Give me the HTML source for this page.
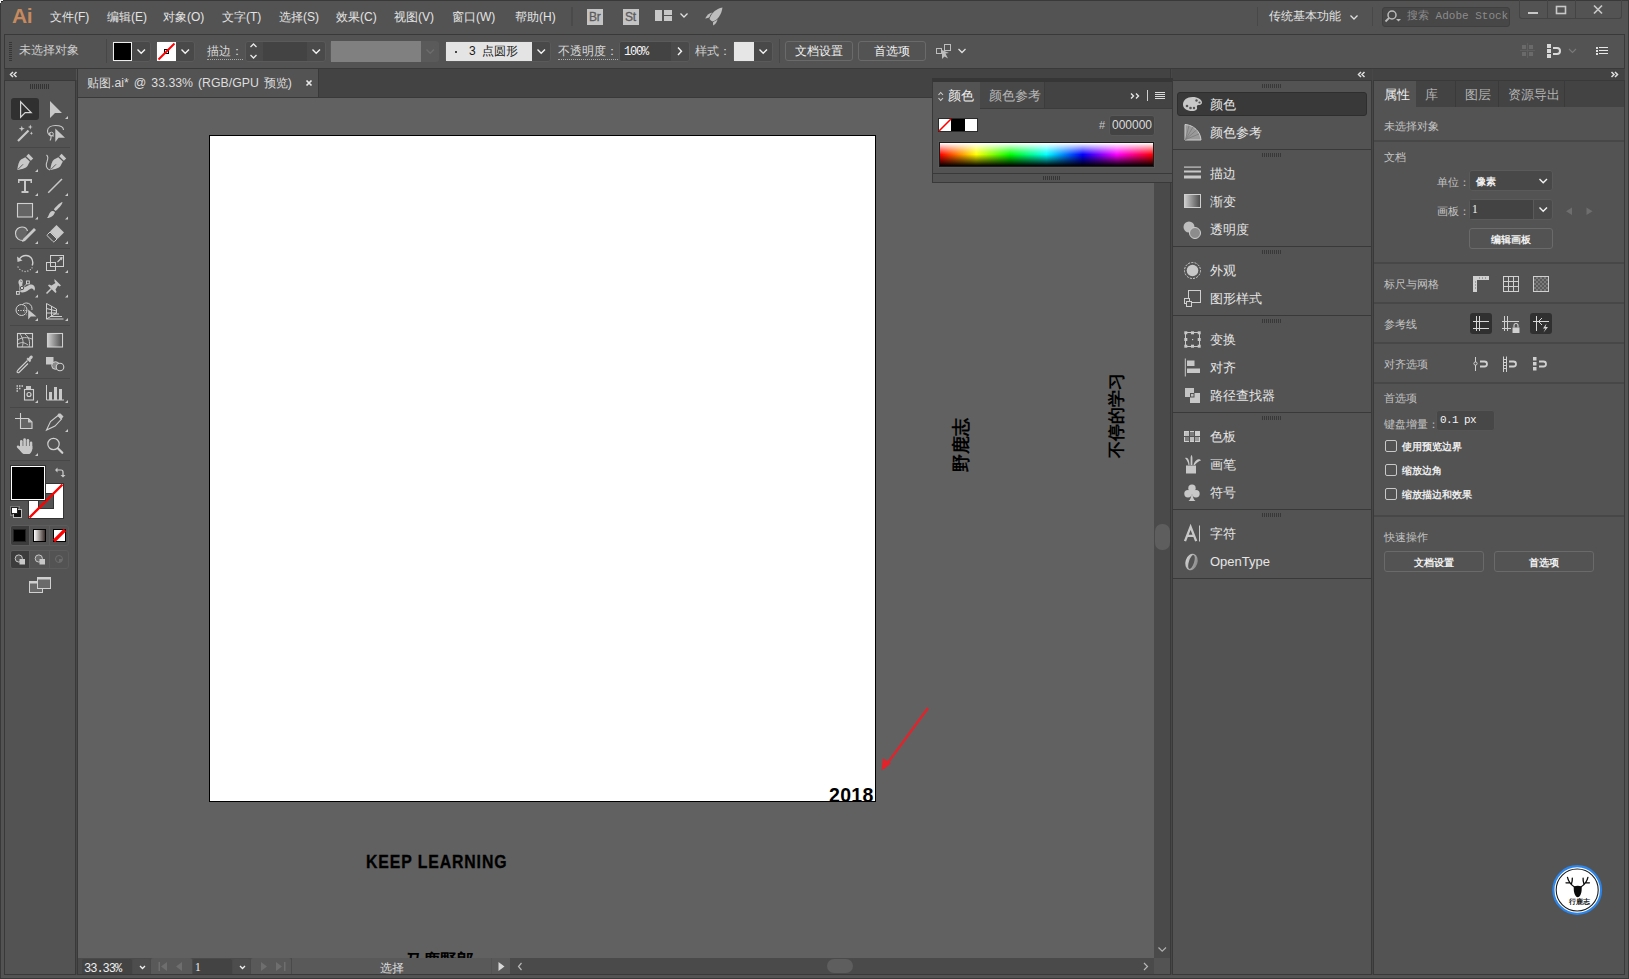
<!DOCTYPE html>
<html><head><meta charset="utf-8">
<style>
*{margin:0;padding:0;box-sizing:border-box}
html,body{width:1629px;height:979px;overflow:hidden;background:#535353;font-family:"Liberation Sans",sans-serif;font-size:12px;color:#dcdcdc}
.a{position:absolute}
.t{position:absolute;white-space:nowrap;line-height:1}
svg.ov{position:absolute;left:0;top:0;width:1629px;height:979px;overflow:visible}
.bd{position:absolute;background:#393939}
.lbl{color:#d4d4d4}
.dot{border-bottom:1px dotted #bbb;padding-bottom:1px}
.btn{position:absolute;border:1px solid #6c6c6c;border-radius:3px;background:#535353}
.dd{position:absolute;background:#4a4a4a;border-radius:2px}
.inp{position:absolute;background:#434343}
</style></head><body>
<!-- ===== window frame ===== -->
<div class="bd" style="left:0;top:0;width:1629px;height:1px"></div>
<div class="bd" style="left:0;top:978px;width:1629px;height:1px"></div>
<div class="bd" style="left:0;top:0;width:1px;height:979px"></div>
<div class="bd" style="left:1628px;top:0;width:1px;height:979px"></div>

<!-- ===== menu bar ===== -->
<div class="t" style="left:12px;top:5px;font-size:21px;font-weight:bold;color:#c68a5e;letter-spacing:-0.3px">Ai</div>
<div class="t" style="left:50px;top:11px;color:#e4e4e4">文件(F)</div>
<div class="t" style="left:107px;top:11px;color:#e4e4e4">编辑(E)</div>
<div class="t" style="left:163px;top:11px;color:#e4e4e4">对象(O)</div>
<div class="t" style="left:222px;top:11px;color:#e4e4e4">文字(T)</div>
<div class="t" style="left:279px;top:11px;color:#e4e4e4">选择(S)</div>
<div class="t" style="left:336px;top:11px;color:#e4e4e4">效果(C)</div>
<div class="t" style="left:394px;top:11px;color:#e4e4e4">视图(V)</div>
<div class="t" style="left:452px;top:11px;color:#e4e4e4">窗口(W)</div>
<div class="t" style="left:515px;top:11px;color:#e4e4e4">帮助(H)</div>
<div class="a" style="left:570.5px;top:7px;width:2px;height:19px;background:#4a4a4a"></div>
<div class="a" style="left:587px;top:9px;width:16px;height:16px;background:#c4c4c4"></div>
<div class="t" style="left:589px;top:11px;font-size:12px;color:#5c5c5c;letter-spacing:-0.3px;-webkit-text-stroke:0.3px #5c5c5c">Br</div>
<div class="a" style="left:623px;top:9px;width:16px;height:16px;background:#c4c4c4"></div>
<div class="t" style="left:625px;top:11px;font-size:12px;color:#5c5c5c;letter-spacing:-0.3px;-webkit-text-stroke:0.3px #5c5c5c">St</div>
<svg class="ov">
 <rect x="655" y="10" width="7" height="11" fill="#c8c8c8"/>
 <rect x="664" y="10" width="8" height="5" fill="#c8c8c8"/>
 <rect x="664" y="16" width="8" height="5" fill="#c8c8c8"/>
 <path d="M680.5 13.5 L684 17 L687.5 13.5" stroke="#e0e0e0" stroke-width="1.3" fill="none"/>
 <path d="M712.5 12.5 C709 13 706.5 15.5 705.2 18.6 C707.5 18.4 709.5 17.5 711 16.5 Z" fill="#bdbdbd"/>
 <path d="M717.5 18.5 C717.5 21.5 715.8 24 713.2 25.5 C712.8 23.5 713 21.5 714 20 Z" fill="#bdbdbd"/>
 <path d="M722.5 7.5 C716 8.5 711 13.5 709.5 19 C710.5 20.2 711.2 20.8 712.5 21.5 C718 20 721.5 14.5 722.5 7.5 Z" fill="#bdbdbd" stroke="#535353" stroke-width="1.4" paint-order="stroke"/>
</svg>
<!-- right side of menu bar -->
<div class="a" style="left:1257px;top:7px;width:1px;height:19px;background:#484848"></div>
<div class="t" style="left:1269px;top:10px;color:#e4e4e4">传统基本功能</div>
<div class="a" style="left:1372px;top:7px;width:1px;height:19px;background:#484848"></div>
<div class="a" style="left:1382px;top:7px;width:128px;height:20px;background:#474747;border:1px solid #3f3f3f;border-radius:3px"></div>
<div class="t" style="left:1407px;top:11px;font-family:'Liberation Mono',monospace;font-size:11px;color:#8c8c8c">搜索 Adobe Stock</div>
<div class="a" style="left:1519px;top:0px;width:103px;height:19px;border:1px solid #444;border-top:none;border-radius:0 0 3px 3px"></div>
<div class="a" style="left:1547px;top:0px;width:1px;height:18px;background:#444"></div>
<div class="a" style="left:1575px;top:0px;width:1px;height:18px;background:#444"></div>
<svg class="ov">
 <path d="M1350.5 15.5 L1354 19 L1357.5 15.5" stroke="#e0e0e0" stroke-width="1.3" fill="none"/>
 <circle cx="1392" cy="15" r="4" stroke="#bbb" stroke-width="1.5" fill="none"/>
 <path d="M1389 18 L1385.5 21.5" stroke="#bbb" stroke-width="1.8"/>
 <path d="M1396 19 L1401 19 L1398.5 21.5 Z" fill="#bbb"/>
 <rect x="1528" y="12" width="10" height="2" fill="#c8c8c8"/>
 <rect x="1556.5" y="6.5" width="9" height="7" stroke="#c8c8c8" stroke-width="1.6" fill="none"/>
 <path d="M1594 5.5 L1602 13.5 M1602 5.5 L1594 13.5" stroke="#c8c8c8" stroke-width="1.7"/>
</svg>

<!-- ===== control bar box ===== -->
<div class="a" style="left:4px;top:34px;width:1621px;height:35px;border:1px solid #393939;background:#535353"></div>

<!-- control bar content -->
<svg class="ov">
 <path d="M9 42.5h3M9 44.5h3M9 46.5h3M9 48.5h3M9 50.5h3M9 52.5h3M9 54.5h3M9 56.5h3M9 58.5h3M9 60.5h3" stroke="#363636" stroke-width="1"/>
</svg>
<div class="t" style="left:19px;top:44px;color:#cdcdcd">未选择对象</div>
<div class="a" style="left:106px;top:39px;width:1px;height:24px;background:#474747"></div>
<!-- fill / stroke -->
<div class="a" style="left:112px;top:41px;width:39px;height:21px;border:1px solid #5a5a5a;border-radius:3px;background:#494949"></div>
<div class="a" style="left:113px;top:42px;width:19px;height:19px;border:1px solid #eee;background:#000"></div>
<div class="a" style="left:156px;top:41px;width:39px;height:21px;border:1px solid #5a5a5a;border-radius:3px;background:#494949"></div>
<div class="a" style="left:157px;top:42px;width:19px;height:19px;background:#fff"></div>
<svg class="ov">
 <path d="M137.5 49.5 L141.2 53.2 L145 49.5" stroke="#f2f2f2" stroke-width="1.4" fill="none"/>
 <path d="M181.5 49.5 L185.2 53.2 L189 49.5" stroke="#f2f2f2" stroke-width="1.4" fill="none"/>
 <rect x="164.5" y="49.5" width="4" height="4" stroke="#000" stroke-width="1" fill="none"/>
 <path d="M158.5 59.5 L174.5 43.5" stroke="#f00" stroke-width="2"/>
</svg>
<div class="t dot" style="left:207px;top:45px;color:#d8d8d8;padding-bottom:2px;border-bottom-color:#aaa">描边：</div>
<!-- stroke weight spinner -->
<div class="a" style="left:245px;top:41px;width:81px;height:21px;border:1px solid #5a5a5a;border-radius:3px;background:#4a4a4a"></div>
<div class="inp" style="left:263px;top:42px;width:44px;height:19px"></div>
<svg class="ov">
 <path d="M250.5 47 L253.5 44 L256.5 47 M250.5 55 L253.5 58 L256.5 55" stroke="#e8e8e8" stroke-width="1.3" fill="none"/>
 <path d="M312.5 49.5 L316.2 53.2 L320 49.5" stroke="#f2f2f2" stroke-width="1.4" fill="none"/>
</svg>
<!-- variable width (disabled) -->
<div class="a" style="left:330px;top:41px;width:109px;height:21px;border-radius:3px;background:#5a5a5a"></div>
<div class="a" style="left:331px;top:41px;width:90px;height:21px;background:#808080"></div>
<svg class="ov"><path d="M426.5 49.5 L430.2 53.2 L434 49.5" stroke="#6c6c6c" stroke-width="1.4" fill="none"/></svg>
<!-- brush definition -->
<div class="a" style="left:445px;top:41px;width:106px;height:21px;border:1px solid #5a5a5a;border-radius:3px;background:#494949"></div>
<div class="a" style="left:446px;top:42px;width:86px;height:19px;background:#e4e4e4"></div>
<div class="a" style="left:454.5px;top:50.5px;width:2.2px;height:2.2px;border-radius:50%;background:#111"></div>
<div class="t" style="left:469px;top:45px;color:#1a1a1a">3&nbsp;&nbsp;点圆形</div>
<svg class="ov"><path d="M537.5 49.5 L541.2 53.2 L545 49.5" stroke="#f2f2f2" stroke-width="1.4" fill="none"/></svg>
<div class="t dot" style="left:558px;top:45px;color:#d8d8d8;padding-bottom:2px;border-bottom-color:#aaa">不透明度：</div>
<!-- opacity -->
<div class="a" style="left:619px;top:41px;width:71px;height:21px;border:1px solid #5a5a5a;border-radius:3px;background:#4a4a4a"></div>
<div class="inp" style="left:620px;top:42px;width:51px;height:19px;border-radius:2px 0 0 2px"></div>
<div class="t" style="left:624px;top:46px;font-family:'Liberation Mono',monospace;font-size:12px;color:#f8f8f8;letter-spacing:-1.2px">100%</div>
<svg class="ov"><path d="M678 47.5 L681.5 51.2 L678 55" stroke="#f2f2f2" stroke-width="1.4" fill="none"/></svg>
<div class="t" style="left:695px;top:45px;color:#d0d0d0">样式：</div>
<div class="a" style="left:733px;top:41px;width:40px;height:21px;border:1px solid #5a5a5a;border-radius:3px;background:#494949"></div>
<div class="a" style="left:734px;top:42px;width:20px;height:19px;background:#e6e6e6"></div>
<svg class="ov"><path d="M759.5 49.5 L763.2 53.2 L767 49.5" stroke="#f2f2f2" stroke-width="1.4" fill="none"/></svg>
<div class="a" style="left:779px;top:39px;width:1px;height:24px;background:#474747"></div>
<div class="btn" style="left:785px;top:41px;width:68px;height:20px;border-color:#6a6a6a"></div>
<div class="t" style="left:795px;top:45px;color:#f0f0f0">文档设置</div>
<div class="btn" style="left:858px;top:41px;width:68px;height:20px;border-color:#6a6a6a"></div>
<div class="t" style="left:874px;top:45px;color:#f0f0f0">首选项</div>
<svg class="ov">
 <rect x="936.5" y="48.5" width="5" height="5" stroke="#bdbdbd" stroke-width="1" fill="none"/>
 <rect x="944.5" y="44.5" width="6" height="6" stroke="#bdbdbd" stroke-width="1" fill="none"/>
 <path d="M942 50 L942 59 L944.5 56.5 L948 58.5 L945.5 53.5 L949 53 Z" fill="#bdbdbd"/>
 <path d="M958.5 49 L962 52.5 L965.5 49" stroke="#e0e0e0" stroke-width="1.3" fill="none"/>
</svg>
<!-- right side control bar icons -->
<svg class="ov">
 <path d="M1527.5 43 V58 M1520 50.5 H1535" stroke="#5f5f5f" stroke-width="1"/>
 <rect x="1522" y="45" width="4" height="4" fill="#6a6a6a"/><rect x="1529" y="45" width="4" height="4" fill="#6a6a6a"/>
 <rect x="1522" y="52" width="4" height="4" fill="#6a6a6a"/><rect x="1529" y="52" width="4" height="4" fill="#6a6a6a"/>
 <rect x="1547" y="44" width="4" height="4" fill="#d8d8d8"/><rect x="1547" y="49" width="4" height="4" fill="#d8d8d8"/><rect x="1547" y="54" width="4" height="4" fill="#d8d8d8"/>
 <path d="M1553 48 H1557 A3 3 0 0 1 1557 54 H1553" stroke="#d8d8d8" stroke-width="2" fill="none"/>
 <path d="M1569 49 L1572.5 52.5 L1576 49" stroke="#7a7a7a" stroke-width="1.1" fill="none"/>
 <rect x="1596" y="47" width="2" height="2" fill="#e0e0e0"/><rect x="1596" y="50" width="2" height="2" fill="#e0e0e0"/><rect x="1596" y="53" width="2" height="2" fill="#e0e0e0"/>
 <path d="M1599 47.5 H1608 M1599 50.5 H1608 M1599 53.5 H1608" stroke="#e8e8e8" stroke-width="1"/>
</svg>

<!-- ===== header strips ===== -->
<div class="a" style="left:4px;top:69px;width:72px;height:11px;background:#434343"></div>
<div class="a" style="left:78px;top:69px;width:1093px;height:28px;background:#434343"></div>
<div class="a" style="left:1172px;top:69px;width:200px;height:11px;background:#434343"></div>
<div class="a" style="left:1373px;top:69px;width:252px;height:11px;background:#434343"></div>

<!-- ===== tools panel box ===== -->
<div class="a" style="left:4px;top:80px;width:72px;height:895px;border:1px solid #393939;background:#535353"></div>
<div class="bd" style="left:77px;top:69px;width:1px;height:906px"></div>
<!-- ===== tools panel content ===== -->
<svg class="ov" fill="#c8c8c8">
 <!-- collapse arrows + grip -->
 <path d="M13 72 L10.5 74.5 L13 77 M16.5 72 L14 74.5 L16.5 77" stroke="#e0e0e0" stroke-width="1.5" fill="none"/>
 <path d="M30.5 84v5M32.5 84v5M34.5 84v5M36.5 84v5M38.5 84v5M40.5 84v5M42.5 84v5M44.5 84v5M46.5 84v5M48.5 84v5" stroke="#333" stroke-width="1"/>
 <!-- separators -->
 <path d="M10 147.5H70M10 248.5H70M10 325.5H70M10 378.5H70M10 407.5H70M10 460.5H70" stroke="#474747" stroke-width="1"/>
 <!-- selection highlight -->
 <rect x="11" y="98" width="28" height="22" rx="3" fill="#303030"/>
 <!-- selection tool -->
 <path d="M20.6 101.8 V117.2 L25.2 112.6 H31.2 Z" stroke="#d4d4d4" stroke-width="1.2" fill="none" stroke-linejoin="miter"/>
 <!-- direct selection -->
 <path d="M50 101 V118 L55 113 H62 Z"/>
 <!-- small triangles -->
 <g>
  <path d="M68 116 V119 H65 Z"/>
  <path d="M38 169 V172 H35 Z"/>
  <path d="M38 193 V196 H35 Z"/><path d="M68 193 V196 H65 Z"/>
  <path d="M38 216.5 V219.5 H35 Z"/><path d="M68 216.5 V219.5 H65 Z"/>
  <path d="M38 241 V244 H35 Z"/><path d="M68 241 V244 H65 Z"/>
  <path d="M38 270 V273 H35 Z"/><path d="M68 270 V273 H65 Z"/>
  <path d="M38 294.5 V297.5 H35 Z"/><path d="M68 294.5 V297.5 H65 Z"/>
  <path d="M38 318 V321 H35 Z"/><path d="M68 318 V321 H65 Z"/>
  <path d="M38 371 V374 H35 Z"/>
  <path d="M38 400 V403 H35 Z"/><path d="M68 400 V403 H65 Z"/>
  <path d="M68 429 V432 H65 Z"/>
  <path d="M38 453 V456 H35 Z"/>
 </g>
 <!-- magic wand -->
 <path d="M18 141 L28.5 130.5" stroke="#c8c8c8" stroke-width="2.2"/>
 <path d="M21.8 125.8 L22.6 128 L24.8 128.6 L22.6 129.4 L21.8 131.6 L21 129.4 L18.8 128.6 L21 128 Z"/>
 <path d="M30.3 124.5 L31 126.4 L32.8 127 L31 127.6 L30.3 129.5 L29.6 127.6 L27.8 127 L29.6 126.4 Z"/>
 <path d="M31.4 131.5 L31.9 132.7 L33 133.2 L31.9 133.7 L31.4 135 L30.9 133.7 L29.8 133.2 L30.9 132.7 Z"/>
 <!-- lasso -->
 <path d="M54 136 C50 136 47.5 134 47.5 131 C47.5 127.5 51 125.5 55.5 125.5 C60.5 125.5 63.5 127.5 63.5 130" stroke="#c8c8c8" stroke-width="1.1" fill="none"/>
 <path d="M50.5 132.5 C49 133 49 135 50.5 135.5 C51.5 136 51 139 50 140.5" stroke="#c8c8c8" stroke-width="1.1" fill="none"/>
 <circle cx="51.5" cy="134" r="1.8" stroke="#c8c8c8" stroke-width="1" fill="none"/>
 <path d="M55.3 128.5 V142 L58.6 137.8 H65 Z"/>
 <!-- pen -->
 <path d="M17.3 169.8 C17.8 165 19 161 21 159.5 L25.3 157.2 L29.8 161.6 L27.5 166 C26 168 22 169.5 17.3 169.8 Z"/>
 <path d="M26.2 156.2 L28.6 153.8 L33.2 158.4 L30.8 160.8 Z"/>
 <path d="M18.3 169 L23 164.3" stroke="#535353" stroke-width="0.9"/>
 <!-- curvature pen -->
 <path d="M50.3 169.8 C50.8 165 52 161 54 159.5 L58.3 157.2 L62.8 161.6 L60.5 166 C59 168 55 169.5 50.3 169.8 Z"/>
 <path d="M59.2 156.2 L61.6 153.8 L66.2 158.4 L63.8 160.8 Z"/>
 <path d="M51.3 169 L56 164.3" stroke="#535353" stroke-width="0.9"/>
 <path d="M46.5 155 C48.5 156.5 48 159 47 161.5 C45.5 165 46 169 50 170" stroke="#c8c8c8" stroke-width="1.1" fill="none"/>
 <!-- type T -->
 <path d="M18 179 H32 V183 H30.5 V181 H26 V191 H28.5 V193 H21.5 V191 H24 V181 H19.5 V183 H18 Z"/>
 <!-- line -->
 <path d="M48.2 192.8 L62 179" stroke="#c8c8c8" stroke-width="1.5"/>
 <!-- rectangle -->
 <rect x="17.5" y="203.5" width="15" height="13.5" stroke="#d0d0d0" stroke-width="1.1" fill="#656565"/>
 <!-- paintbrush -->
 <path d="M62.5 202 C62 205 58 209 55.5 211 L53.8 209.3 C56 206.5 60 202.5 62.5 202 Z"/>
 <path d="M55 212 C54 215.5 51 218 47 218 C48.5 216.5 49 213.5 50.5 212 C51.5 210.5 53.5 210.5 55 212 Z"/>
 <!-- shaper -->
 <path d="M24 240.5 C19 241 15.5 238 15.5 233.5 C15.5 229.5 18.5 227 22 227 C25 227 27 229 27.5 231" stroke="#d0d0d0" stroke-width="1.1" fill="#656565"/>
 <path d="M34 228 L36 230 L25 241 L22 242 L23 239 Z"/>
 <!-- eraser -->
 <path d="M56.5 225 L64 232.5 L57.5 239 L50 231.5 Z"/>
 <path d="M50 232 L57 239 L54.5 241.5 C54 242 53.5 242 53 241.5 L47.5 236 C47 235.5 47 235 47.5 234.5 Z" stroke="#d0d0d0" stroke-width="1" fill="none"/>
 <!-- rotate -->
 <path d="M19.5 259 C21 256.5 23.5 255.5 26 255.5 C30 255.5 32.8 258.5 32.8 262.5 C32.8 263.5 32.6 264.5 32.2 265.5" stroke="#d0d0d0" stroke-width="1.4" fill="none"/>
 <path d="M17 256.5 L17.5 262 L22.5 260.5 Z"/>
 <path d="M18 267l.1.1M19.8 269.3l.1.1M22.2 270.8l.1.1M25 271.4l.1.1M27.8 271l.1.1M30.3 269.6l.1.1M32 267.8l.1.1" stroke="#d0d0d0" stroke-width="1.2" stroke-linecap="round"/>
 <!-- scale -->
 <rect x="50.5" y="255.5" width="13" height="11" stroke="#d0d0d0" stroke-width="1" fill="none"/>
 <rect x="46.5" y="262.5" width="9" height="8" stroke="#d0d0d0" stroke-width="1" fill="none"/>
 <path d="M57.5 262 L62 257.5" stroke="#d0d0d0" stroke-width="1.1"/>
 <path d="M62.5 257 L59 257.5 L62 260.5 Z"/>
 <!-- puppet warp -->
 <path d="M18.6 283.5 C18 281.5 18.8 279.5 20.6 279.3 C22.3 279.2 23.2 280.8 22.7 282.6 C22.3 284.3 21.8 285.8 23.2 286.8 C25.2 288 27.6 285.3 30.2 284.6 C32.7 284 34.6 285.6 34.9 288 C35.1 289.6 34.6 290.6 33.9 290.6 C33.4 289.2 32.6 288.2 31.1 288.6 C28.6 289.6 26.1 292.6 22.6 292.6 C20.1 292.6 18.9 291.1 19.3 289.1 C19.7 287.1 19.4 285.3 18.6 283.5 Z"/>
 <path d="M20.2 281.2 C20.8 280.6 21.6 281 21.4 281.8" stroke="#535353" stroke-width="0.8" fill="none"/>
 <path d="M18.5 292 L27.5 283" stroke="#535353" stroke-width="1.6"/>
 <path d="M18.5 292 L27.5 283" stroke="#d0d0d0" stroke-width="0.8"/>
 <rect x="16.5" y="291.5" width="2.8" height="2.8" stroke="#d0d0d0" stroke-width="1" fill="#535353"/>
 <rect x="26.5" y="281" width="2.8" height="2.8" stroke="#d0d0d0" stroke-width="1" fill="#535353"/>
 <circle cx="22" cy="288" r="1.7" stroke="#535353" stroke-width="1" fill="#d0d0d0"/>
 <!-- pin -->
 <path d="M54.5 279 L61 285.5 L59.5 286.5 L58 285.5 L55.5 289.5 L56.5 292 L55.5 293 L48 285.5 L49 284.5 L51.5 285.5 L55.5 283 L54.5 281.5 Z"/>
 <path d="M46.5 293.5 L51.5 288.5" stroke="#c8c8c8" stroke-width="1.6"/>
 <!-- shape builder -->
 <circle cx="21.5" cy="310" r="5.5" stroke="#d0d0d0" stroke-width="1" fill="none"/>
 <path d="M22.5 304.6 C23.5 303.6 25 303 26.5 303 C29.5 303 32 305.5 32 308.5 C32 309 32 309.5 31.8 310" stroke="#d0d0d0" stroke-width="1" fill="none"/>
 <path d="M26.5 304.8 C25 306 24 308 24.2 310.5 C24.4 312.5 25.5 314.2 27 315.2" stroke="#8a8a8a" stroke-width="0.9" fill="none"/>
 <path d="M18 310.5h1M20.5 310.5h1M23 310.5h1M25.5 310.5h1" stroke="#e0e0e0" stroke-width="1.2"/>
 <path d="M28.2 309.5 V319.5 L30.8 316.5 H36.5 Z"/>
 <!-- perspective grid -->
 <path d="M46.5 303.5 L56.5 309 L56.5 313 L46.5 319 Z M46.5 308.5 L56.5 311 M51.5 306 V316 M46.5 313 L56.5 313" stroke="#d0d0d0" stroke-width="1" fill="none"/>
 <path d="M46.5 319 H63.5 M50 316.5 H62 M53.5 314 H59" stroke="#d0d0d0" stroke-width="1" fill="none"/>
 <!-- mesh -->
 <rect x="17.5" y="333.5" width="15" height="13.5" stroke="#d0d0d0" stroke-width="1.1" fill="none"/>
 <path d="M18 340 C22 337 27 337 32 339 M20 334 C23 338 24 343 22 347 M25 334 C29 337 30.5 342 29 347 M18 344 C21 342 24 342 28 345" stroke="#d0d0d0" stroke-width="0.9" fill="none"/>
 <!-- gradient -->
 <defs><linearGradient id="gr1" x1="0" x2="1"><stop offset="0" stop-color="#d0d0d0"/><stop offset="1" stop-color="#4a4a4a"/></linearGradient>
 <linearGradient id="gr2" x1="0" x2="1"><stop offset="0" stop-color="#fff"/><stop offset="1" stop-color="#3a2e2a"/></linearGradient>
 <linearGradient id="spec" x1="0" x2="1"><stop offset="0" stop-color="#f00"/><stop offset="0.17" stop-color="#ff0"/><stop offset="0.33" stop-color="#0f0"/><stop offset="0.5" stop-color="#0ff"/><stop offset="0.67" stop-color="#00f"/><stop offset="0.83" stop-color="#f0f"/><stop offset="1" stop-color="#f00"/></linearGradient>
 <linearGradient id="specv" x1="0" x2="0" y1="0" y2="1"><stop offset="0" stop-color="#fff" stop-opacity="1"/><stop offset="0.5" stop-color="#fff" stop-opacity="0"/><stop offset="0.5" stop-color="#000" stop-opacity="0"/><stop offset="1" stop-color="#000" stop-opacity="1"/></linearGradient>
 </defs>
 <rect x="47.5" y="333.5" width="15" height="13.5" stroke="#d0d0d0" stroke-width="1.1" fill="url(#gr1)"/>
 <!-- eyedropper -->
 <path d="M30 356 C31.5 354.5 33.5 356 32.5 358 L30.5 360 L31.2 360.8 L29.8 362.2 L26.5 358.9 L27.9 357.5 L28.6 358.2 Z"/>
 <path d="M27.5 360.5 L19 369 C17.5 370.5 17 371 17 372 C17.5 373 18.5 373 19.5 372 L28 363.5" stroke="#d0d0d0" stroke-width="1.1" fill="none"/>
 <!-- blend -->
 <rect x="46" y="357" width="7.5" height="7.5"/>
 <circle cx="55.5" cy="365.5" r="3.8" stroke="#d0d0d0" stroke-width="1" fill="#8a8a8a"/>
 <circle cx="60" cy="367" r="3.8" stroke="#d0d0d0" stroke-width="1.1" fill="#535353"/>
 <!-- symbol sprayer -->
 <path d="M16.5 386h1.5M19 386h1.5M21.5 386h1.5M16.5 388.5h1.5M19 388.5h1.5M16.5 391h1.5" stroke="#d0d0d0" stroke-width="1.5"/>
 <rect x="24.5" y="389.5" width="9" height="10.5" stroke="#d0d0d0" stroke-width="1.1" fill="none"/>
 <rect x="26" y="386" width="5" height="3"/>
 <circle cx="29" cy="394.5" r="2" stroke="#d0d0d0" stroke-width="1.2" fill="none"/>
 <!-- graph -->
 <path d="M46.5 385 V400 H64" stroke="#d0d0d0" stroke-width="1" fill="none"/>
 <rect x="49" y="392" width="3" height="8"/><rect x="54" y="387" width="3" height="13"/><rect x="59" y="389" width="3" height="11"/>
 <!-- artboard -->
 <path d="M20.5 413 V418 M15 418.5 H20" stroke="#d0d0d0" stroke-width="1.1"/>
 <path d="M20.5 418.5 H28.5 L32 422 V428.5 H20.5 Z" stroke="#d0d0d0" stroke-width="1.1" fill="#656565"/>
 <path d="M28 418.5 L32 422.5 H28 Z"/>
 <!-- slice / knife -->
 <path d="M58 415.5 L61.5 419 L55 426 L46.5 430 L50.5 421.5 Z" stroke="#d0d0d0" stroke-width="1.1" fill="none"/>
 <path d="M58.5 413.5 L60.5 413.5 L63.5 416.5 L61.5 419 L57.5 415 Z"/>
 <!-- hand -->
 <rect x="20" y="440" width="2.6" height="9" rx="1.3"/>
 <rect x="23.3" y="438.2" width="2.6" height="10" rx="1.3"/>
 <rect x="26.6" y="439" width="2.6" height="10" rx="1.3"/>
 <rect x="29.8" y="441.5" width="2.5" height="8" rx="1.25"/>
 <path d="M20 446 H32.3 V448.5 C32.3 451 31 453 29.5 454 H23.5 C22 453 20.5 451.5 20 450 Z"/>
 <path d="M17.2 445.8 C16.5 446.5 16.8 447.3 17.5 448 L21.5 452 L22.5 449 L19.5 446 C18.8 445.3 17.8 445.2 17.2 445.8 Z"/>
 <!-- zoom -->
 <circle cx="53.5" cy="444" r="5.7" stroke="#d0d0d0" stroke-width="1.2" fill="none"/>
 <path d="M57.8 448.3 L62.3 452.8" stroke="#d0d0d0" stroke-width="2.2" stroke-linecap="round"/>
 <!-- swap arrow -->
 <path d="M56 470 H61 C62.5 470 63 471 63 472 V476" stroke="#d0d0d0" stroke-width="1.2" fill="none"/>
 <path d="M55 470 L57.5 467.5 V472.5 Z M63 477.5 L60.5 475 H65.5 Z"/>
 <!-- default fill/stroke -->
 <rect x="10.5" y="506.5" width="9" height="9" fill="none" stroke="#777" stroke-width="1"/>
 <rect x="13.5" y="509.5" width="8" height="8" fill="#111" stroke="#bbb" stroke-width="1"/>
 <rect x="11.5" y="507.5" width="6" height="6" fill="#fff" stroke="#222" stroke-width="1"/>
</svg>
<!-- stroke swatch -->
<div class="a" style="left:28px;top:483px;width:36px;height:36px;background:#333;"></div>
<div class="a" style="left:29px;top:484px;width:34px;height:34px;background:#fff;"></div>
<div class="a" style="left:38px;top:493px;width:16px;height:16px;background:#333;"></div>
<div class="a" style="left:39px;top:494px;width:14px;height:14px;background:#535353;"></div>
<svg class="ov"><path d="M29.5 517.5 L62.5 484.5" stroke="#f00" stroke-width="2.4"/></svg>
<!-- fill swatch -->
<div class="a" style="left:10px;top:465px;width:36px;height:36px;background:#333;"></div>
<div class="a" style="left:11px;top:466px;width:34px;height:34px;background:#fff;"></div>
<div class="a" style="left:12px;top:467px;width:32px;height:32px;background:#000;"></div>
<!-- color mode group -->
<div class="a" style="left:10px;top:525px;width:59px;height:21px;border:1px solid #5c5c5c;border-radius:3px;background:#535353"></div>
<div class="a" style="left:11px;top:526px;width:18px;height:19px;background:#3c3c3c;border-radius:2px 0 0 2px"></div>
<div class="a" style="left:29px;top:526px;width:1px;height:19px;background:#5c5c5c"></div>
<div class="a" style="left:49px;top:526px;width:1px;height:19px;background:#5c5c5c"></div>
<div class="a" style="left:13px;top:529px;width:13px;height:13px;background:#000;border:1px solid #222"></div>
<div class="a" style="left:33px;top:529px;width:13px;height:13px;border:1px solid #000;background:linear-gradient(90deg,#fff,#3a2e2a)"></div>
<div class="a" style="left:53px;top:529px;width:13px;height:13px;border:1px solid #000;background:#fff;overflow:hidden"></div>
<svg class="ov"><path d="M54 541 L65 530" stroke="#f00" stroke-width="3.2"/></svg>
<!-- draw mode group -->
<div class="a" style="left:10px;top:550px;width:59px;height:19px;border:1px solid #5c5c5c;border-radius:3px;background:#535353"></div>
<div class="a" style="left:11px;top:551px;width:18px;height:17px;background:#3c3c3c;border-radius:2px 0 0 2px"></div>
<div class="a" style="left:29px;top:551px;width:1px;height:17px;background:#5c5c5c"></div>
<div class="a" style="left:49px;top:551px;width:1px;height:17px;background:#5c5c5c"></div>
<svg class="ov">
 <circle cx="18.8" cy="558.5" r="3.6" stroke="#c8c8c8" stroke-width="1" fill="#555"/>
 <rect x="19.5" y="559" width="5.5" height="5.5" fill="#c8c8c8"/>
 <circle cx="38.8" cy="558.5" r="3.6" stroke="#c8c8c8" stroke-width="1" fill="#6a6a6a"/>
 <rect x="39.5" y="559" width="5.5" height="5.5" fill="#c8c8c8"/>
 <circle cx="59" cy="559" r="3.5" stroke="#6c6c6c" stroke-width="1" fill="none"/>
 <path d="M59 559 H62.5 A3.5 3.5 0 0 1 59 562.5 Z" fill="#6c6c6c"/>
 <!-- screen mode -->
 <rect x="29.5" y="581.5" width="13" height="11" stroke="#d0d0d0" stroke-width="1" fill="#6a6a6a"/>
 <rect x="29.5" y="581.5" width="13" height="2" fill="#d0d0d0"/>
 <rect x="37.5" y="577.5" width="13" height="11" stroke="#d0d0d0" stroke-width="1" fill="#6a6a6a"/>
 <rect x="37.5" y="577.5" width="13" height="2" fill="#d0d0d0"/>
</svg>


<!-- ===== document tab ===== -->
<div class="a" style="left:78px;top:69px;width:241px;height:28px;background:#535353;border-right:1px solid #393939"></div>
<div class="t" style="left:87px;top:77px;font-size:12.3px;word-spacing:1.6px;color:#dedede">贴图.ai* @ 33.33% (RGB/GPU 预览)</div>

<!-- ===== canvas ===== -->
<div class="bd" style="left:78px;top:97px;width:1093px;height:1px"></div>
<div class="a" style="left:78px;top:98px;width:1076px;height:860px;background:#616161;overflow:hidden">
  <!-- artboard -->
  <div class="a" style="left:131px;top:37px;width:667px;height:667px;border:1px solid #000;background:#fff"></div>
  <div class="t" style="left:751px;top:688px;font-size:19.5px;font-weight:bold;color:#000;letter-spacing:0.3px">2018</div>
  <div class="t" style="left:288px;top:755px;font-size:18px;font-weight:bold;color:#000;letter-spacing:1px;-webkit-text-stroke:0.3px #000;transform:scaleX(0.88);transform-origin:0 0">KEEP LEARNING</div>
  <div class="t" style="left:875px;top:374px;font-size:17.5px;font-weight:bold;color:#000;transform:rotate(-90deg);transform-origin:0 0">野鹿志</div>
  <div class="t" style="left:1031px;top:360px;font-size:16.7px;font-weight:bold;color:#000;transform:rotate(-90deg);transform-origin:0 0">不停的学习</div>
  <svg class="a" style="left:0;top:0;width:1076px;height:860px;overflow:visible"><path d="M850 610 L806 670" stroke="#e5222a" stroke-width="2.2" fill="none"/><path d="M803.5 672.5 L805 660 L813 665.5 Z" fill="#e5222a"/></svg>
  <div class="t" style="left:328px;top:854px;font-size:16.5px;font-weight:bold;color:#000">马鹿野郎</div>
</div>
<!-- vertical scrollbar -->
<div class="a" style="left:1154px;top:98px;width:16px;height:860px;background:#4a4a4a"></div>
<div class="bd" style="left:1170px;top:69px;width:1px;height:906px"></div>
<div class="a" style="left:1171px;top:69px;width:1px;height:906px;background:#474747"></div>
<!-- status bar -->
<div class="a" style="left:78px;top:958px;width:1092px;height:16px;background:#4a4a4a"></div>
<div class="bd" style="left:78px;top:974px;width:1093px;height:1px"></div>

<!-- ===== floating color panel ===== -->
<div class="a" style="left:932px;top:78px;width:241px;height:105px;background:#535353;border:1px solid #393939;border-top:4px solid #363636"></div>
<div class="a" style="left:933px;top:82px;width:239px;height:26px;background:#434343"></div>
<div class="a" style="left:933px;top:82px;width:47px;height:27px;background:#535353"></div>
<div class="a" style="left:980px;top:82px;width:65px;height:26px;background:#484848;border-right:1px solid #3c3c3c"></div>
<div class="a" style="left:980px;top:108px;width:192px;height:1px;background:#3c3c3c"></div>
<div class="t" style="left:948px;top:89px;font-size:13px;color:#f0f0f0">颜色</div>
<div class="t" style="left:989px;top:89px;font-size:13px;color:#b8b8b8">颜色参考</div>
<svg class="ov">
 <path d="M938.5 95 L940.7 92.5 L943 95 M938.5 98 L940.7 100.5 L943 98" stroke="#cfcfcf" stroke-width="1.1" fill="none"/>
 <path d="M1131 93.5 L1133.5 96 L1131 98.5 M1136 93.5 L1138.5 96 L1136 98.5" stroke="#e6e6e6" stroke-width="1.4" fill="none"/>
 <path d="M1147.5 90 V101" stroke="#cfcfcf" stroke-width="1"/>
 <path d="M1155 92.5H1165M1155 94.5H1165M1155 96.5H1165M1155 98.5H1165" stroke="#dcdcdc" stroke-width="1"/>
</svg>
<!-- none/black/white -->
<div class="a" style="left:938px;top:118px;width:40px;height:14px;background:#2a2a2a"></div>
<div class="a" style="left:939px;top:119px;width:12px;height:12px;background:#fff;overflow:hidden"></div>
<div class="a" style="left:951px;top:119px;width:14px;height:12px;background:#000"></div>
<div class="a" style="left:965px;top:119px;width:12px;height:12px;background:#fff"></div>
<svg class="ov"><path d="M939 131 L951 119" stroke="#f00" stroke-width="1.6"/></svg>
<div class="t" style="left:1099px;top:120px;font-size:11px;color:#c8c8c8">#</div>
<div class="a" style="left:1109px;top:115px;width:46px;height:21px;background:#434343;border:1px solid #585858;border-radius:3px"></div>
<div class="t" style="left:1112px;top:119px;font-family:"Liberation Mono",monospace;font-size:11.5px;color:#f4f4f4;letter-spacing:-0.9px">000000</div>
<!-- spectrum -->
<div class="a" style="left:938px;top:141px;width:217px;height:27px;background:#5a5a5a"></div>
<div class="a" style="left:939px;top:142px;width:215px;height:25px;background:#1a1a1a"></div>
<div class="a" style="left:940px;top:143px;width:213px;height:23px;background:linear-gradient(180deg,rgba(255,255,255,1) 0%,rgba(255,255,255,0) 50%,rgba(0,0,0,0) 50%,rgba(0,0,0,1) 100%),linear-gradient(90deg,#f00 0%,#ff0 17%,#0f0 33%,#0ff 50%,#00f 67%,#f0f 83%,#f00 100%)"></div>
<!-- bottom grip bar -->
<div class="a" style="left:933px;top:173px;width:239px;height:1px;background:#393939"></div>
<svg class="ov"><path d="M1043.5 176v4M1045.5 176v4M1047.5 176v4M1049.5 176v4M1051.5 176v4M1053.5 176v4M1055.5 176v4M1057.5 176v4M1059.5 176v4" stroke="#363636" stroke-width="1"/></svg>

<!-- status bar content -->
<div class="a" style="left:82px;top:959px;width:50px;height:15px;background:#434343;border-radius:2px 2px 0 0"></div>
<div class="t" style="left:84px;top:963px;font-family:'Liberation Mono',monospace;font-size:12px;color:#f0f0f0;letter-spacing:-1px">33.33%</div>
<div class="a" style="left:133px;top:959px;width:17px;height:15px;background:#4d4d4d;border-radius:2px 2px 0 0"></div>
<div class="a" style="left:151px;top:958px;width:41px;height:16px;background:#595959;border-radius:2px 2px 0 0"></div>
<div class="a" style="left:193px;top:959px;width:39px;height:15px;background:#434343;border-radius:2px 2px 0 0"></div>
<div class="t" style="left:195px;top:962px;font-family:'Liberation Serif',serif;font-size:11.5px;color:#f0f0f0">1</div>
<div class="a" style="left:233px;top:959px;width:17px;height:15px;background:#4d4d4d;border-radius:2px 2px 0 0"></div>
<div class="a" style="left:251px;top:958px;width:40px;height:16px;background:#595959;border-radius:2px 2px 0 0"></div>
<div class="a" style="left:292px;top:958px;width:199px;height:16px;background:#595959"></div>
<div class="t" style="left:380px;top:962px;font-size:12px;color:#dcdcdc">选择</div>
<div class="a" style="left:491px;top:958px;width:19px;height:16px;background:#595959;border-left:1px solid #535353"></div>
<div class="a" style="left:827px;top:959px;width:26px;height:14px;background:#5e5e5e;border-radius:7px"></div>
<div class="a" style="left:1155px;top:524px;width:15px;height:26px;background:#5e5e5e;border-radius:7px"></div>
<div class="a" style="left:1154px;top:958px;width:16px;height:16px;background:#535353"></div>
<svg class="ov">
 <path d="M140 966 L142.5 968.5 L145 966" stroke="#f0f0f0" stroke-width="1.3" fill="none"/>
 <path d="M240 966 L242.5 968.5 L245 966" stroke="#f0f0f0" stroke-width="1.3" fill="none"/>
 <rect x="158.5" y="962" width="1.5" height="9" fill="#6e6e6e"/>
 <path d="M167 962 V971 L161 966.5 Z" fill="#6e6e6e"/>
 <path d="M182 962 V971 L176 966.5 Z" fill="#6e6e6e"/>
 <path d="M261 962 V971 L267 966.5 Z" fill="#6e6e6e"/>
 <path d="M276 962 V971 L282 966.5 Z" fill="#6e6e6e"/>
 <rect x="284" y="962" width="1.5" height="9" fill="#6e6e6e"/>
 <path d="M498.5 962 V971 L504.5 966.5 Z" fill="#d8d8d8"/>
 <path d="M521.5 963 L518.5 966.5 L521.5 970" stroke="#b8b8b8" stroke-width="1.2" fill="none"/>
 <path d="M1144 963 L1147.5 966.5 L1144 970" stroke="#b8b8b8" stroke-width="1.2" fill="none"/>
 <path d="M1158.5 947.5 L1162.2 951.2 L1166 947.5" stroke="#b0b0b0" stroke-width="1.2" fill="none"/>
 <!-- tab close -->
 <path d="M306.5 80.5 L311.5 85.5 M311.5 80.5 L306.5 85.5" stroke="#e8e8e8" stroke-width="1.7"/>
</svg>
<div class="a" style="left:76px;top:80px;width:1px;height:895px;background:#474747"></div>

<!-- ===== middle dock ===== -->
<div class="a" style="left:1172px;top:80px;width:200px;height:895px;border:1px solid #393939;background:#535353"></div>
<div class="a" style="left:1372px;top:69px;width:1px;height:906px;background:#474747"></div>

<!-- middle dock content -->
<div class="a" style="left:1177px;top:92px;width:190px;height:24px;background:#393939;border:1px solid #2e2e2e;border-radius:3px"></div>
<div class="t" style="left:1210px;top:98px;font-size:13px;color:#e6e6e6">颜色</div>
<div class="t" style="left:1210px;top:126px;font-size:13px;color:#e6e6e6">颜色参考</div>
<div class="t" style="left:1210px;top:167px;font-size:13px;color:#e6e6e6">描边</div>
<div class="t" style="left:1210px;top:195px;font-size:13px;color:#e6e6e6">渐变</div>
<div class="t" style="left:1210px;top:223px;font-size:13px;color:#e6e6e6">透明度</div>
<div class="t" style="left:1210px;top:264px;font-size:13px;color:#e6e6e6">外观</div>
<div class="t" style="left:1210px;top:292px;font-size:13px;color:#e6e6e6">图形样式</div>
<div class="t" style="left:1210px;top:333px;font-size:13px;color:#e6e6e6">变换</div>
<div class="t" style="left:1210px;top:361px;font-size:13px;color:#e6e6e6">对齐</div>
<div class="t" style="left:1210px;top:389px;font-size:13px;color:#e6e6e6">路径查找器</div>
<div class="t" style="left:1210px;top:430px;font-size:13px;color:#e6e6e6">色板</div>
<div class="t" style="left:1210px;top:458px;font-size:13px;color:#e6e6e6">画笔</div>
<div class="t" style="left:1210px;top:486px;font-size:13px;color:#e6e6e6">符号</div>
<div class="t" style="left:1210px;top:527px;font-size:13px;color:#e6e6e6">字符</div>
<div class="t" style="left:1210px;top:555px;font-size:13px;color:#e6e6e6">OpenType</div>
<svg class="ov" fill="#c8c8c8">
 <path d="M1361 72 L1358.5 74.5 L1361 77 M1364.5 72 L1362 74.5 L1364.5 77" stroke="#e0e0e0" stroke-width="1.5" fill="none"/>
 <path d="M1262.5 84v4M1264.5 84v4M1266.5 84v4M1268.5 84v4M1270.5 84v4M1272.5 84v4M1274.5 84v4M1276.5 84v4M1278.5 84v4M1280.5 84v4" stroke="#383838" stroke-width="1"/>
 <path d="M1262.5 153v4M1264.5 153v4M1266.5 153v4M1268.5 153v4M1270.5 153v4M1272.5 153v4M1274.5 153v4M1276.5 153v4M1278.5 153v4M1280.5 153v4" stroke="#383838" stroke-width="1"/>
 <path d="M1262.5 250v4M1264.5 250v4M1266.5 250v4M1268.5 250v4M1270.5 250v4M1272.5 250v4M1274.5 250v4M1276.5 250v4M1278.5 250v4M1280.5 250v4" stroke="#383838" stroke-width="1"/>
 <path d="M1262.5 319v4M1264.5 319v4M1266.5 319v4M1268.5 319v4M1270.5 319v4M1272.5 319v4M1274.5 319v4M1276.5 319v4M1278.5 319v4M1280.5 319v4" stroke="#383838" stroke-width="1"/>
 <path d="M1262.5 416v4M1264.5 416v4M1266.5 416v4M1268.5 416v4M1270.5 416v4M1272.5 416v4M1274.5 416v4M1276.5 416v4M1278.5 416v4M1280.5 416v4" stroke="#383838" stroke-width="1"/>
 <path d="M1262.5 513v4M1264.5 513v4M1266.5 513v4M1268.5 513v4M1270.5 513v4M1272.5 513v4M1274.5 513v4M1276.5 513v4M1278.5 513v4M1280.5 513v4" stroke="#383838" stroke-width="1"/>
 <rect x="1173" y="149" width="198" height="1" fill="#393939"/>
 <rect x="1173" y="246" width="198" height="1" fill="#393939"/>
 <rect x="1173" y="315" width="198" height="1" fill="#393939"/>
 <rect x="1173" y="412" width="198" height="1" fill="#393939"/>
 <rect x="1173" y="509" width="198" height="1" fill="#393939"/>
 <rect x="1173" y="578" width="198" height="1" fill="#393939"/>

 <!-- palette -->
 <path d="M1192.5 97 C1198 97 1202 99.5 1202 102.5 C1202 104.5 1200 105 1198.5 105 C1197 105 1196.5 106 1197 107.5 C1197.5 109 1196.5 111 1192 111 C1187 111 1183 108.5 1183 104.5 C1183 100 1187 97 1192.5 97 Z"/>
 <circle cx="1187" cy="106" r="1.3" fill="#535353"/><circle cx="1190.5" cy="108" r="1.3" fill="#535353"/><circle cx="1194" cy="108" r="1.2" fill="#535353"/>
 <circle cx="1196.5" cy="100.5" r="1.2" fill="#535353"/><circle cx="1199.5" cy="102.5" r="1.1" fill="#535353"/>
 <!-- color guide -->
 <path d="M1185 124.5 C1193.5 125 1200.5 131.5 1201 140 H1185 Z" fill="#9a9a9a" stroke="#cfcfcf" stroke-width="1"/>
 <path d="M1185.5 139.5 L1189 125.5 M1185.5 139.5 L1193 127 M1185.5 139.5 L1196.5 130 M1185.5 139.5 L1199 134" stroke="#7a7a7a" stroke-width="0.8"/>
 <!-- stroke -->
 <rect x="1184" y="166.5" width="17" height="1.2"/><rect x="1184" y="170.5" width="17" height="2"/><rect x="1184" y="175.5" width="17" height="3"/>
 <!-- gradient -->
 <rect x="1184.5" y="194.5" width="16" height="13" stroke="#cfcfcf" stroke-width="1" fill="url(#gr1)"/>
 <!-- transparency -->
 <circle cx="1189" cy="227" r="5.5" fill="#bdbdbd"/>
 <circle cx="1195" cy="233" r="5.5" fill="#8c8c8c" stroke="#cfcfcf" stroke-width="1"/>
 <!-- appearance -->
 <circle cx="1192.5" cy="270.5" r="8" stroke="#cfcfcf" stroke-width="1" stroke-dasharray="2 1.3" fill="none"/>
 <circle cx="1192.5" cy="270.5" r="5.8"/>
 <!-- graphic styles -->
 <rect x="1188.5" y="290.5" width="12" height="12" stroke="#cfcfcf" stroke-width="1" fill="none"/>
 <rect x="1184.5" y="298.5" width="5" height="5" stroke="#cfcfcf" stroke-width="1" fill="#535353"/>
 <rect x="1186.5" y="301.5" width="5" height="5" stroke="#cfcfcf" stroke-width="1" fill="#535353"/>
 <!-- transform -->
 <rect x="1185.5" y="332.5" width="14" height="14" stroke="#c8c8c8" stroke-width="1" fill="none"/>
 <rect x="1184.3" y="331.3" width="3" height="3"/><rect x="1191" y="331.3" width="3" height="3"/><rect x="1197.7" y="331.3" width="3" height="3"/>
 <rect x="1184.3" y="338" width="3" height="3"/><rect x="1197.7" y="338" width="3" height="3"/>
 <rect x="1184.3" y="344.7" width="3" height="3"/><rect x="1191" y="344.7" width="3" height="3"/><rect x="1197.7" y="344.7" width="3" height="3"/>
 <rect x="1192" y="339" width="1.2" height="1.2"/>
 <!-- align -->
 <rect x="1184.8" y="358.5" width="1" height="18"/>
 <rect x="1187" y="360.5" width="7.5" height="5.5"/><rect x="1187" y="368.5" width="13" height="4.5"/>
 <!-- pathfinder -->
 <rect x="1185" y="388" width="9" height="9" fill="#c4c4c4"/>
 <rect x="1190" y="393" width="10" height="10" fill="#c8c8c8"/>
 <rect x="1190.5" y="393.5" width="3.5" height="3.5" fill="#bdbdbd" stroke="#535353" stroke-width="1"/>
 <!-- swatches -->
 <rect x="1184" y="431" width="16" height="11" fill="#cfcfcf"/>
 <path d="M1184 436.5 H1200 M1189.5 431 V442 M1194.5 431 V442" stroke="#535353" stroke-width="1"/>
 <rect x="1185" y="432" width="4" height="4" fill="#bdbdbd"/><rect x="1190" y="432" width="4" height="4" fill="#7c7c7c"/><rect x="1195" y="432" width="4" height="4" fill="#cfcfcf"/>
 <rect x="1185" y="437" width="4" height="4" fill="#7c7c7c"/><rect x="1190" y="437" width="4" height="4" fill="#bdbdbd"/><rect x="1195" y="437" width="4" height="4" fill="#9a9a9a"/>
 <!-- brushes -->
 <path d="M1186 465.5 H1196 V473.5 H1186 Z"/>
 <path d="M1188.5 465 C1188 462 1186.5 459.5 1185 458 C1186 457.5 1187 457.5 1187.8 458.5 C1189 460 1189.5 462.5 1189.5 465 Z"/>
 <path d="M1190.6 465 V458 C1190.6 456.5 1191 455.5 1191.5 455 C1192 455.5 1192.4 456.5 1192.4 458 V465 Z"/>
 <path d="M1193.5 465 C1194 462.5 1195.5 460.5 1197.5 459.5 C1199 459 1200.5 459.5 1201 460.5 C1199 461 1197 462.5 1194.8 465 Z"/>
 <!-- symbols -->
 <circle cx="1192" cy="488.3" r="3.7"/><circle cx="1188" cy="493.8" r="3.7"/><circle cx="1196" cy="493.8" r="3.7"/>
 <rect x="1190" y="489" width="4" height="5"/>
 <path d="M1191.3 494 C1191.3 497 1190.5 499.5 1188.5 501 H1195.5 C1193.5 499.5 1192.7 497 1192.7 494 Z"/>
 <!-- character -->
 <path d="M1185 541.2 L1190.6 526.8 L1196.2 541.2 M1187.4 535.8 H1193.8" stroke="#c8c8c8" stroke-width="2.3" fill="none"/>
 <rect x="1199" y="525.5" width="1" height="16"/>
</svg>
<svg class="ov"><defs><linearGradient id="otg" x1="0" x2="1"><stop offset="0" stop-color="#d0d0d0"/><stop offset="1" stop-color="#8a8a8a"/></linearGradient></defs>
 <ellipse cx="1191.5" cy="562" rx="6" ry="8.3" transform="rotate(18 1191.5 562)" fill="url(#otg)"/>
 <ellipse cx="1191.5" cy="562" rx="2.6" ry="7.2" transform="rotate(18 1191.5 562)" fill="#535353"/>
</svg>
<!-- ===== properties panel ===== -->
<div class="a" style="left:1373px;top:80px;width:252px;height:895px;border:1px solid #393939;background:#535353"></div>

<!-- properties panel content -->
<div class="a" style="left:1374px;top:81px;width:250px;height:26px;background:#434343"></div>
<div class="a" style="left:1374px;top:81px;width:42px;height:27px;background:#535353"></div>
<div class="a" style="left:1455px;top:81px;width:1px;height:26px;background:#3a3a3a"></div>
<div class="a" style="left:1498px;top:81px;width:1px;height:26px;background:#3a3a3a"></div>
<div class="a" style="left:1564px;top:81px;width:1px;height:26px;background:#3a3a3a"></div>
<div class="t" style="left:1384px;top:88px;font-size:13px;color:#f0f0f0">属性</div>
<div class="t" style="left:1425px;top:88px;font-size:13px;color:#b4b4b4">库</div>
<div class="t" style="left:1465px;top:88px;font-size:13px;color:#b4b4b4">图层</div>
<div class="t" style="left:1508px;top:88px;font-size:13px;color:#b4b4b4">资源导出</div>
<svg class="ov">
 <path d="M1611.5 72 L1614 74.5 L1611.5 77 M1615 72 L1617.5 74.5 L1615 77" stroke="#e0e0e0" stroke-width="1.5" fill="none"/>
</svg>
<div class="t" style="left:1384px;top:121px;font-size:10.5px;color:#c4c4c4">未选择对象</div>
<div class="a" style="left:1374px;top:140px;width:250px;height:2px;background:#474747"></div>
<div class="t" style="left:1384px;top:152px;font-size:10.5px;color:#c4c4c4">文档</div>
<div class="t" style="left:1437px;top:177px;font-size:10.5px;color:#c4c4c4">单位：</div>
<div class="a" style="left:1469px;top:170px;width:84px;height:21px;background:#484848;border:1px solid #5a5a5a;border-radius:3px"></div>
<div class="t" style="left:1476px;top:177px;font-size:10px;font-weight:bold;color:#f0f0f0">像素</div>
<div class="t" style="left:1437px;top:206px;font-size:10.5px;color:#c4c4c4">画板：</div>
<div class="a" style="left:1469px;top:199px;width:84px;height:21px;background:#4a4a4a;border:1px solid #5a5a5a;border-radius:3px"></div>
<div class="a" style="left:1470px;top:200px;width:64px;height:19px;background:#434343;border-right:1px solid #5a5a5a"></div>
<div class="t" style="left:1472px;top:204px;font-family:'Liberation Serif',serif;font-size:11.5px;color:#f4f4f4">1</div>
<div class="btn" style="left:1469px;top:228px;width:84px;height:21px;border-color:#6a6a6a"></div>
<div class="t" style="left:1491px;top:235px;font-size:10px;font-weight:bold;color:#f0f0f0">编辑画板</div>
<div class="a" style="left:1374px;top:262px;width:250px;height:2px;background:#474747"></div>
<div class="t" style="left:1384px;top:279px;font-size:10.5px;color:#c4c4c4">标尺与网格</div>
<div class="a" style="left:1374px;top:302px;width:250px;height:2px;background:#474747"></div>
<div class="t" style="left:1384px;top:319px;font-size:10.5px;color:#c4c4c4">参考线</div>
<div class="a" style="left:1470px;top:313px;width:22px;height:21px;background:#303030;border-radius:3px"></div>
<div class="a" style="left:1530px;top:313px;width:22px;height:21px;background:#303030;border-radius:3px"></div>
<div class="a" style="left:1374px;top:342px;width:250px;height:2px;background:#474747"></div>
<div class="t" style="left:1384px;top:359px;font-size:10.5px;color:#c4c4c4">对齐选项</div>
<div class="a" style="left:1374px;top:382px;width:250px;height:2px;background:#474747"></div>
<div class="t" style="left:1384px;top:393px;font-size:10.5px;color:#c4c4c4">首选项</div>
<div class="t" style="left:1384px;top:419px;font-size:10.5px;color:#c4c4c4">键盘增量：</div>
<div class="a" style="left:1436px;top:410px;width:59px;height:21px;background:#474747;border:1px solid #555;border-radius:3px"></div>
<div class="t" style="left:1440px;top:415px;font-family:'Liberation Mono',monospace;font-size:11px;color:#f4f4f4;letter-spacing:-0.6px">0.1 px</div>
<div class="a" style="left:1385px;top:440px;width:12px;height:12px;border:1px solid #c8c8c8;border-radius:2px"></div>
<div class="t" style="left:1402px;top:442px;font-size:10px;font-weight:bold;color:#ececec">使用预览边界</div>
<div class="a" style="left:1385px;top:464px;width:12px;height:12px;border:1px solid #c8c8c8;border-radius:2px"></div>
<div class="t" style="left:1402px;top:466px;font-size:10px;font-weight:bold;color:#ececec">缩放边角</div>
<div class="a" style="left:1385px;top:488px;width:12px;height:12px;border:1px solid #c8c8c8;border-radius:2px"></div>
<div class="t" style="left:1402px;top:490px;font-size:10px;font-weight:bold;color:#ececec">缩放描边和效果</div>
<div class="a" style="left:1374px;top:515px;width:250px;height:2px;background:#474747"></div>
<div class="t" style="left:1384px;top:532px;font-size:10.5px;color:#c4c4c4">快速操作</div>
<div class="btn" style="left:1384px;top:551px;width:100px;height:21px;border-color:#6a6a6a"></div>
<div class="t" style="left:1414px;top:558px;font-size:10px;font-weight:bold;color:#f0f0f0">文档设置</div>
<div class="btn" style="left:1494px;top:551px;width:100px;height:21px;border-color:#6a6a6a"></div>
<div class="t" style="left:1529px;top:558px;font-size:10px;font-weight:bold;color:#f0f0f0">首选项</div>
<svg class="ov" fill="#d0d0d0">
 <path d="M1539.5 179 L1543.2 182.7 L1547 179" stroke="#f2f2f2" stroke-width="1.4" fill="none"/>
 <path d="M1539.5 207.5 L1543.2 211.2 L1547 207.5" stroke="#f2f2f2" stroke-width="1.4" fill="none"/>
 <path d="M1572 207.5 V215 L1566 211.2 Z" fill="#6e6e6e"/>
 <path d="M1586.5 207.5 V215 L1592.5 211.2 Z" fill="#6e6e6e"/>
 <!-- ruler -->
 <path d="M1473 276 H1489 V280 H1477 V292 H1473 Z"/>
 <path d="M1479 278h.8M1482 278h.8M1485 278h.8M1475 282h.8M1475 285h.8M1475 288h.8" stroke="#535353" stroke-width="1"/>
 <!-- grid -->
 <rect x="1503.5" y="276.5" width="15" height="15" stroke="#d0d0d0" stroke-width="1" fill="none"/>
 <path d="M1508.5 276.5 V291.5 M1513.5 276.5 V291.5 M1503.5 281.5 H1518.5 M1503.5 286.5 H1518.5" stroke="#d0d0d0" stroke-width="1"/>
 <!-- transparency grid -->
 <rect x="1533.5" y="276.5" width="15" height="15" stroke="#d0d0d0" stroke-width="1" fill="#7a7a7a"/>
 <path d="M1534 277h2v2h-2zM1538 277h2v2h-2zM1542 277h2v2h-2zM1546 277h2v2h-2zM1536 279h2v2h-2zM1540 279h2v2h-2zM1544 279h2v2h-2zM1534 281h2v2h-2zM1538 281h2v2h-2zM1542 281h2v2h-2zM1546 281h2v2h-2zM1536 283h2v2h-2zM1540 283h2v2h-2zM1544 283h2v2h-2zM1534 285h2v2h-2zM1538 285h2v2h-2zM1542 285h2v2h-2zM1546 285h2v2h-2zM1536 287h2v2h-2zM1540 287h2v2h-2zM1544 287h2v2h-2zM1534 289h2v2h-2zM1538 289h2v2h-2zM1542 289h2v2h-2zM1546 289h2v2h-2z" fill="#5a5a5a"/>
 <!-- guides -->
 <path d="M1476.5 316 V331 M1479.5 316 V331 M1473 321.5 H1489 M1473 328.5 H1489" stroke="#d8d8d8" stroke-width="1"/>
 <!-- lock guides -->
 <path d="M1504.5 316 V331 M1507.5 316 V331 M1502 321.5 H1519 M1502 328.5 H1511" stroke="#d0d0d0" stroke-width="1"/>
 <rect x="1512.5" y="327.5" width="7" height="5.5"/>
 <path d="M1514 327.5 V325.5 A2 2 0 0 1 1518 325.5 V327.5" stroke="#d0d0d0" stroke-width="1.1" fill="none"/>
 <!-- smart guides -->
 <path d="M1536.5 316 V331 M1533 321.5 H1549" stroke="#d8d8d8" stroke-width="1"/>
 <path d="M1542 318 L1538.5 321.5 L1542 325" stroke="#d8d8d8" stroke-width="1" fill="none"/>
 <path d="M1546.5 323.5 L1543 328.5 H1545.5 L1543.5 332.5 L1548 327 H1545.5 Z" fill="#d8d8d8"/>
 <!-- align options -->
 <path d="M1475.5 357 V371" stroke="#d0d0d0" stroke-width="1"/>
 <circle cx="1475.5" cy="363.5" r="1.6" fill="#535353" stroke="#d0d0d0" stroke-width="1"/>
 <path d="M1480 361.5 H1484.5 A2.5 2.5 0 0 1 1484.5 366.5 H1480" stroke="#d0d0d0" stroke-width="1.8" fill="none"/>
 <path d="M1503.5 356.5 V372 M1506.5 356.5 V372 M1503 359.5h4M1503 362.5h4M1503 365.5h4M1503 368.5h4" stroke="#d0d0d0" stroke-width="1"/>
 <path d="M1509 361.5 H1513.5 A2.5 2.5 0 0 1 1513.5 366.5 H1509" stroke="#d0d0d0" stroke-width="1.8" fill="none"/>
 <rect x="1533" y="357" width="3.5" height="3.5"/><rect x="1533" y="362" width="3.5" height="3.5"/><rect x="1533" y="367" width="3.5" height="3.5"/>
 <path d="M1539 361.5 H1543.5 A2.5 2.5 0 0 1 1543.5 366.5 H1539" stroke="#d0d0d0" stroke-width="1.8" fill="none"/>
</svg>
<!-- logo badge -->
<svg class="ov">
 <circle cx="1577.2" cy="890" r="23.8" fill="#fff" stroke="#2a86ec" stroke-width="2.2"/>
 <circle cx="1577.2" cy="890" r="21" fill="none" stroke="#1a1a1a" stroke-width="1.1"/>
 <path d="M1573.8 886.5 C1573.3 893 1575.5 897.2 1577.7 897.2 C1580 897.2 1582.2 893 1581.6 886.5 C1579.5 885.6 1576 885.6 1573.8 886.5 Z" fill="#0a0a0a"/>
 <path d="M1574.5 887 C1571.5 885 1568.5 882 1567.5 877.3 M1569.5 882.6 L1566 882.8 M1571.3 884.5 C1572 882.5 1572.5 880.5 1572.3 878.2 M1580.9 887 C1583.9 885 1586.9 882 1587.9 877.3 M1585.9 882.6 L1589.4 882.8 M1584.1 884.5 C1583.4 882.5 1582.9 880.5 1583.1 878.2" stroke="#0a0a0a" stroke-width="1.3" fill="none" stroke-linecap="round"/>
</svg>
<div class="t" style="left:1569px;top:899px;font-size:6.5px;font-weight:bold;color:#111;letter-spacing:-0.2px">行鹿志</div>
<div class="a" style="left:0;top:0;width:3px;height:1px;background:#f4f4f4"></div>
<div class="a" style="left:0;top:1px;width:1px;height:2px;background:#f4f4f4"></div>
<div class="a" style="left:1px;top:1px;width:2px;height:1px;background:#222"></div>
</body></html>
